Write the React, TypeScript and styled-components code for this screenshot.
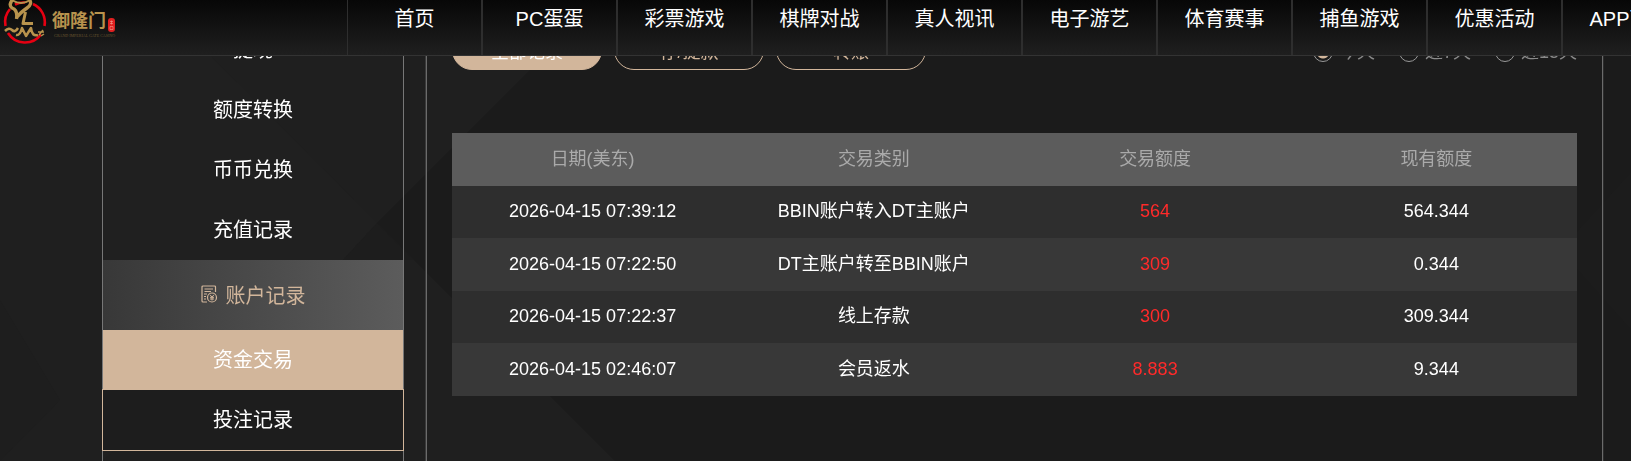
import React, { useState } from 'react';
import styled, { createGlobalStyle } from 'styled-components';

const gold = '#d2b69b';

const GlobalStyle = createGlobalStyle`
  * { box-sizing: border-box; }
  body {
    margin: 0;
    background: #1f1f1f;
    color: #fff;
    font-family: "Liberation Sans", "Noto Sans CJK SC", sans-serif;
    overflow: hidden;
  }
`;

const Header = styled.header`
  position: fixed;
  top: 0;
  left: 0;
  right: 0;
  z-index: 10;
  height: 56px;
  display: flex;
  overflow: hidden;
  background: linear-gradient(#070707, #1f1f1f);
  border-bottom: 1px solid #333;
`;

const LogoLink = styled.a`
  flex: none;
  width: 347px;
  svg { display: block; }
`;

const Nav = styled.nav`
  flex: none;
  display: flex;
`;

const NavItem = styled.a`
  flex: none;
  width: 135px;
  border-left: 1px solid #2e2e2e;
  border-right: 1px solid #2e2e2e;
  color: #fff;
  font-size: 20px;
  line-height: 38px;
  text-align: center;
  text-decoration: none;
  white-space: nowrap;
`;

const Backdrop = styled.svg`
  position: fixed;
  inset: 0;
  z-index: -1;
  width: 100%;
  height: 100%;
`;

const Page = styled.div`
  display: flex;
  gap: 22px;
  min-height: 100vh;
  padding: 0 28px 0 102px;
`;

const Sidebar = styled.aside`
  flex: none;
  width: 302px;
  padding-top: 20px;
  border: solid #777;
  border-width: 0 1px;
`;

const SideLink = styled.a<{ $active?: boolean }>`
  display: block;
  height: 60px;
  line-height: 60px;
  font-size: 20px;
  text-align: center;
  text-decoration: none;
  color: #fff;
  background: ${(p) => (p.$active ? gold : 'transparent')};
`;

const SideHeading = styled.button`
  display: flex;
  align-items: center;
  justify-content: center;
  gap: 8px;
  width: 100%;
  height: 70px;
  padding: 0 0 2px;
  border: 0;
  background: linear-gradient(90deg, #383838, #5c5c5c);
  color: ${gold};
  font: inherit;
  font-size: 20px;
`;

const SubBox = styled.div`
  margin: -1px -1px 0;
  border: 1px solid ${gold};
  background: #1d1d1d;
`;

const Panel = styled.main`
  flex: 1;
  min-width: 0;
  padding: 30px 25px 0;
  border: solid #6b6b6b;
  border-width: 0 1px;
  box-shadow: -1px 0 #3a3a3a, 1px 0 #2c2c2c;
`;

const Filters = styled.div`
  display: flex;
  align-items: center;
  justify-content: space-between;
  height: 40px;
  margin-bottom: 63px;
`;

const Tabs = styled.div`
  display: flex;
  gap: 12px;
`;

const Tab = styled.button<{ $active: boolean }>`
  width: 150px;
  height: 40px;
  padding: 0;
  border: 1px solid ${gold};
  border-radius: 20px;
  background: ${(p) => (p.$active ? gold : 'transparent')};
  color: ${(p) => (p.$active ? '#fff' : gold)};
  font: inherit;
  font-size: 18px;
`;

const Ranges = styled.div`
  display: flex;
  gap: 24px;
  padding-top: 4px;
`;

const RangeLabel = styled.label`
  display: flex;
  align-items: center;
  gap: 6px;
  font-size: 18px;
  line-height: 24px;
  color: #8a8a8a;
`;

const Radio = styled.input`
  appearance: none;
  width: 20px;
  height: 20px;
  margin: 0;
  border: 1px solid #999;
  border-radius: 50%;
  &:checked {
    background: radial-gradient(circle, ${gold} 6px, transparent 7px);
  }
`;

const Table = styled.table`
  width: 100%;
  table-layout: fixed;
  border-collapse: collapse;
  font-size: 18px;
  line-height: 24px;
  text-align: center;
`;

const HeadRow = styled.tr`
  height: 53px;
  background: #5c5c5c;
  color: #aaa;
  th { padding: 0 0 2px; font-weight: 400; }
`;

const Row = styled.tr`
  height: 52px;
  background: #2e2e2e;
  &:nth-child(even) { height: 53px; background: #383838; }
`;

const Cell = styled.td<{ $alert?: boolean }>`
  padding: 0 0 2px;
  color: ${(p) => (p.$alert ? '#ff2a2a' : '#fff')};
`;

const Logo = () => (
  <svg width="130" height="50" viewBox="0 0 130 50" fill="none" role="img" aria-label="御隆门">
    <g stroke="#e60012" strokeWidth="2.6">
      <path d="M10 9 A20 20 0 0 0 5.500 26" />
      <path d="M15 4.500 A20 20 0 0 1 25 2.500" />
      <path d="M33 4 A20 20 0 0 1 44.500 26" />
      <path d="M8 33 A20 20 0 0 0 41 34.500" />
    </g>
    <g stroke="#b8934d" strokeLinejoin="round">
      <path strokeWidth="3.400" d="M13 -1 Q8 5 12 8 Q18 10 16.500 19 M29 -1 Q33 4 27 8 Q20 13 17 17" />
      <path strokeWidth="2" d="M12 0 Q16 3 21 3 Q26 3 30 0" />
      <path strokeWidth="3" d="M25.500 12 L23 23.500 H33" />
      <path strokeWidth="2.500" d="M5 31 Q9 27 12 30 Q15 33 18 28 M16 35 Q20 36 22 28 L26 36 L31 28 Q32 37 38 35" />
      <path strokeWidth="1.500" d="M38 32 H44 M39 35 L43 30 M41 36 L44 34" />
    </g>
    <text x="52" y="27" fill="#b8934d" fontSize="18" fontWeight="700">御隆门</text>
    <text x="54" y="37" fill="#6b5630" fontSize="4" fontFamily="Liberation Serif">GRAND IMPERIAL GATE CASINO</text>
    <rect x="108" y="18" width="7" height="14" rx="3" fill="#e02020" />
    <path stroke="#f3a08f" strokeWidth=".6" d="M110 21.500 H113 M110 23.500 H113 M111.500 20.500 V24.500 M110 26.500 H113 V29.500 H110 Z" />
  </svg>
);

const RecordIcon = () => (
  <svg width="17" height="18" viewBox="0 0 17 18" fill="none" stroke={gold} strokeWidth="1.2" aria-hidden="true">
    <path d="M14.500 7 V2 Q14.500 1 13.500 1 H2 Q1 1 1 2 V16 Q1 17 2 17 H6" />
    <path d="M3.500 4 H12 M3.500 6.500 H10 M3 9 H6 M3 11.500 H5 M3 14 H5" />
    <circle cx="11" cy="12.500" r="4.500" />
    <path d="M9 9.800 L11 12 L13 9.800 M11 12 V15.500 M9 12.300 H13 M9 14 H13" strokeWidth="1" />
  </svg>
);

const navItems = ['首页', 'PC蛋蛋', '彩票游戏', '棋牌对战', '真人视讯', '电子游艺', '体育赛事', '捕鱼游戏', '优惠活动', 'APP下载'];
const sideItems = ['提现', '额度转换', '币币兑换', '充值记录'];
const tabs = ['全部记录', '存/提款', '转账'];
const ranges = ['今天', '近7天', '近15天'];
const columns = ['日期(美东)', '交易类别', '交易额度', '现有额度'];
const records = [
  ['2026-04-15 07:39:12', 'BBIN账户转入DT主账户', '564', '564.344'],
  ['2026-04-15 07:22:50', 'DT主账户转至BBIN账户', '309', '0.344'],
  ['2026-04-15 07:22:37', '线上存款', '300', '309.344'],
  ['2026-04-15 02:46:07', '会员返水', '8.883', '9.344'],
];

export default function App() {
  const [tab, setTab] = useState(tabs[0]);
  const [range, setRange] = useState(ranges[0]);
  return (
    <>
      <GlobalStyle />
      <Backdrop viewBox="0 0 1631 461" preserveAspectRatio="xMinYMin slice" aria-hidden="true">
        <path fill="#202020" d="M155 0 L377 223 L343 260 L102 461 L102 0 Z" />
        <path fill="#1b1b1b" d="M600 0 L377 223 L615 461 H1631 V0 Z" />
        <path fill="#1d1d1d" d="M377 223 L343 260 H413 Z" />
        <path fill="#1e1e1e" d="M0 300 L60 400 L0 461 Z" />
        <path fill="#1c1c1c" d="M1631 172 L1560 250 L1631 330 Z" />
      </Backdrop>
      <Header>
        <LogoLink href="#"><Logo /></LogoLink>
        <Nav>
          {navItems.map((n) => <NavItem key={n} href="#">{n}</NavItem>)}
        </Nav>
      </Header>
      <Page>
        <Sidebar>
          {sideItems.map((s) => <SideLink key={s} href="#">{s}</SideLink>)}
          <SideHeading type="button"><RecordIcon />账户记录</SideHeading>
          <SideLink href="#" $active>资金交易</SideLink>
          <SubBox><SideLink href="#">投注记录</SideLink></SubBox>
        </Sidebar>
        <Panel>
          <Filters>
            <Tabs>
              {tabs.map((t) => (
                <Tab key={t} type="button" $active={t === tab} onClick={() => setTab(t)}>{t}</Tab>
              ))}
            </Tabs>
            <Ranges>
              {ranges.map((r) => (
                <RangeLabel key={r}>
                  <Radio type="radio" name="range" checked={r === range} onChange={() => setRange(r)} />
                  {r}
                </RangeLabel>
              ))}
            </Ranges>
          </Filters>
          <Table>
            <thead>
              <HeadRow>{columns.map((c) => <th key={c} scope="col">{c}</th>)}</HeadRow>
            </thead>
            <tbody>
              {records.map((r) => (
                <Row key={r[0]}>
                  {r.map((v, i) => <Cell key={i} $alert={i === 2}>{v}</Cell>)}
                </Row>
              ))}
            </tbody>
          </Table>
        </Panel>
      </Page>
    </>
  );
}
